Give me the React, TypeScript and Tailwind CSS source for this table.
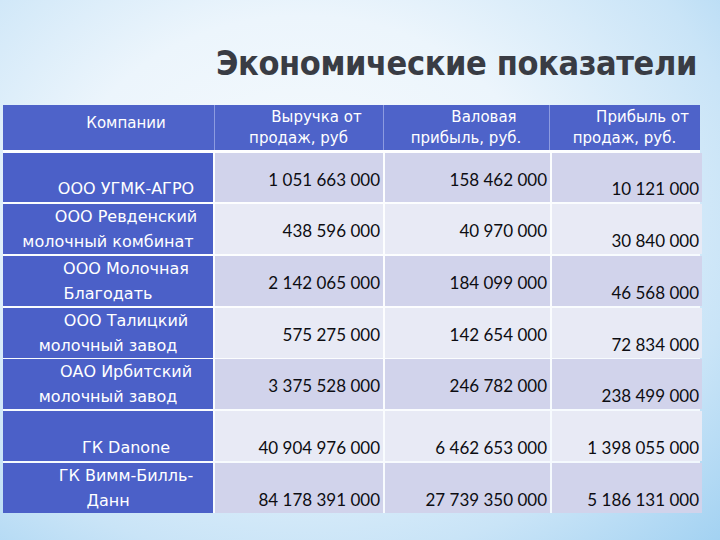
import React from 'react'

type Row = {
  name: string[]
  nameAlign: 'end' | 'fill'
  revenue: string
  gross: string
  mid: 'center' | 'end'
  profit: string
  dark: boolean
  h: string
}

const rows: Row[] = [
  { name: ['ООО УГМК-АГРО'], nameAlign: 'end', revenue: '1 051 663 000', gross: '158 462 000', mid: 'center', profit: '10 121 000', dark: true, h: 'h-[49px]' },
  { name: ['ООО Ревденский', 'молочный комбинат'], nameAlign: 'fill', revenue: '438 596 000', gross: '40 970 000', mid: 'center', profit: '30 840 000', dark: false, h: 'h-[50px]' },
  { name: ['ООО Молочная', 'Благодать'], nameAlign: 'fill', revenue: '2 142 065 000', gross: '184 099 000', mid: 'center', profit: '46 568 000', dark: true, h: 'h-[50px]' },
  { name: ['ООО Талицкий', 'молочный завод'], nameAlign: 'fill', revenue: '575 275 000', gross: '142 654 000', mid: 'center', profit: '72 834 000', dark: false, h: 'h-[49px]' },
  { name: ['ОАО Ирбитский', 'молочный завод'], nameAlign: 'fill', revenue: '3 375 528 000', gross: '246 782 000', mid: 'center', profit: '238 499 000', dark: true, h: 'h-[50px]' },
  { name: ['ГК Danone'], nameAlign: 'end', revenue: '40 904 976 000', gross: '6 462 653 000', mid: 'end', profit: '1 398 055 000', dark: false, h: 'h-[50px]' },
  { name: ['ГК Вимм-Билль-', 'Данн'], nameAlign: 'fill', revenue: '84 178 391 000', gross: '27 739 350 000', mid: 'end', profit: '5 186 131 000', dark: true, h: 'h-[50px]' }
]

function Lines({ lines }: { lines: string[] }) {
  return (
    <p className="text-center indent-[36px] leading-[25px]">
      {lines.map((l, i) => (
        <React.Fragment key={i}>
          {i > 0 && <br />}
          {l}
        </React.Fragment>
      ))}
    </p>
  )
}

function NumCell({ value, align, dark }: { value: string; align: 'center' | 'end'; dark: boolean }) {
  return (
    <div
      className={`flex justify-end pr-[3px] ${align === 'center' ? 'items-center pt-[3px]' : 'items-end pb-[1px]'} ${
        dark ? 'bg-[#d1d3eb]' : 'bg-[#e8eaf5]'
      }`}
    >
      <span className="font-['Lato',sans-serif] text-[17px] leading-[25px] text-[#0d0d12]">{value}</span>
    </div>
  )
}

export default function App() {
  return (
    <div className="w-[720px] h-[540px] overflow-hidden bg-[radial-gradient(ellipse_at_42%_38%,#f6fafd_0%,#ecf5fc_40%,#c9e4f7_75%,#a3d2f2_100%)]">
      <div className="flex justify-end pr-[23px] pt-[46px] h-[105px]">
        <h1 className="font-['DejaVu_Sans_Condensed','DejaVu_Sans',sans-serif] font-bold text-[34px] leading-none tracking-[-0.4px] text-[#393c44]">
          Экономические показатели
        </h1>
      </div>

      <div className="ml-[3px] w-[697px] font-['DejaVu_Sans',sans-serif] text-white">
        <div className="grid grid-cols-[210px_168px_165px_150px] gap-x-[1px] h-[45px] bg-[#4e63c9]">
          <div className="pt-[6px] text-[15px]">
            <Lines lines={['Компании']} />
          </div>
          {[
            ['Выручка от', 'продаж, руб'],
            ['Валовая', 'прибыль, руб.'],
            ['Прибыль от', 'продаж, руб.']
          ].map((h, i) => (
            <div key={i} className="border-l border-[#8c9be0] pt-[2px] text-[15px] leading-[22px]">
              <p className="text-center indent-[36px] leading-[21px]">
                {h[0]}
                <br />
                {h[1]}
              </p>
            </div>
          ))}
        </div>

        <div className="h-[3px] bg-white/90" />

        <div className="flex flex-col gap-[2px] bg-white/80">
          {rows.map((r, i) => (
            <div key={i} className={`grid grid-cols-[210px_168px_165px_150px] gap-x-[2px] ${r.h}`}>
              <div className={`flex flex-col bg-[#4b60c8] text-[16px] ${r.nameAlign === 'end' ? 'justify-end pb-[1px]' : 'justify-center'}`}>
                <Lines lines={r.name} />
              </div>
              <NumCell value={r.revenue} align={r.mid} dark={r.dark} />
              <NumCell value={r.gross} align={r.mid} dark={r.dark} />
              <NumCell value={r.profit} align="end" dark={r.dark} />
            </div>
          ))}
        </div>
      </div>
    </div>
  )
}
